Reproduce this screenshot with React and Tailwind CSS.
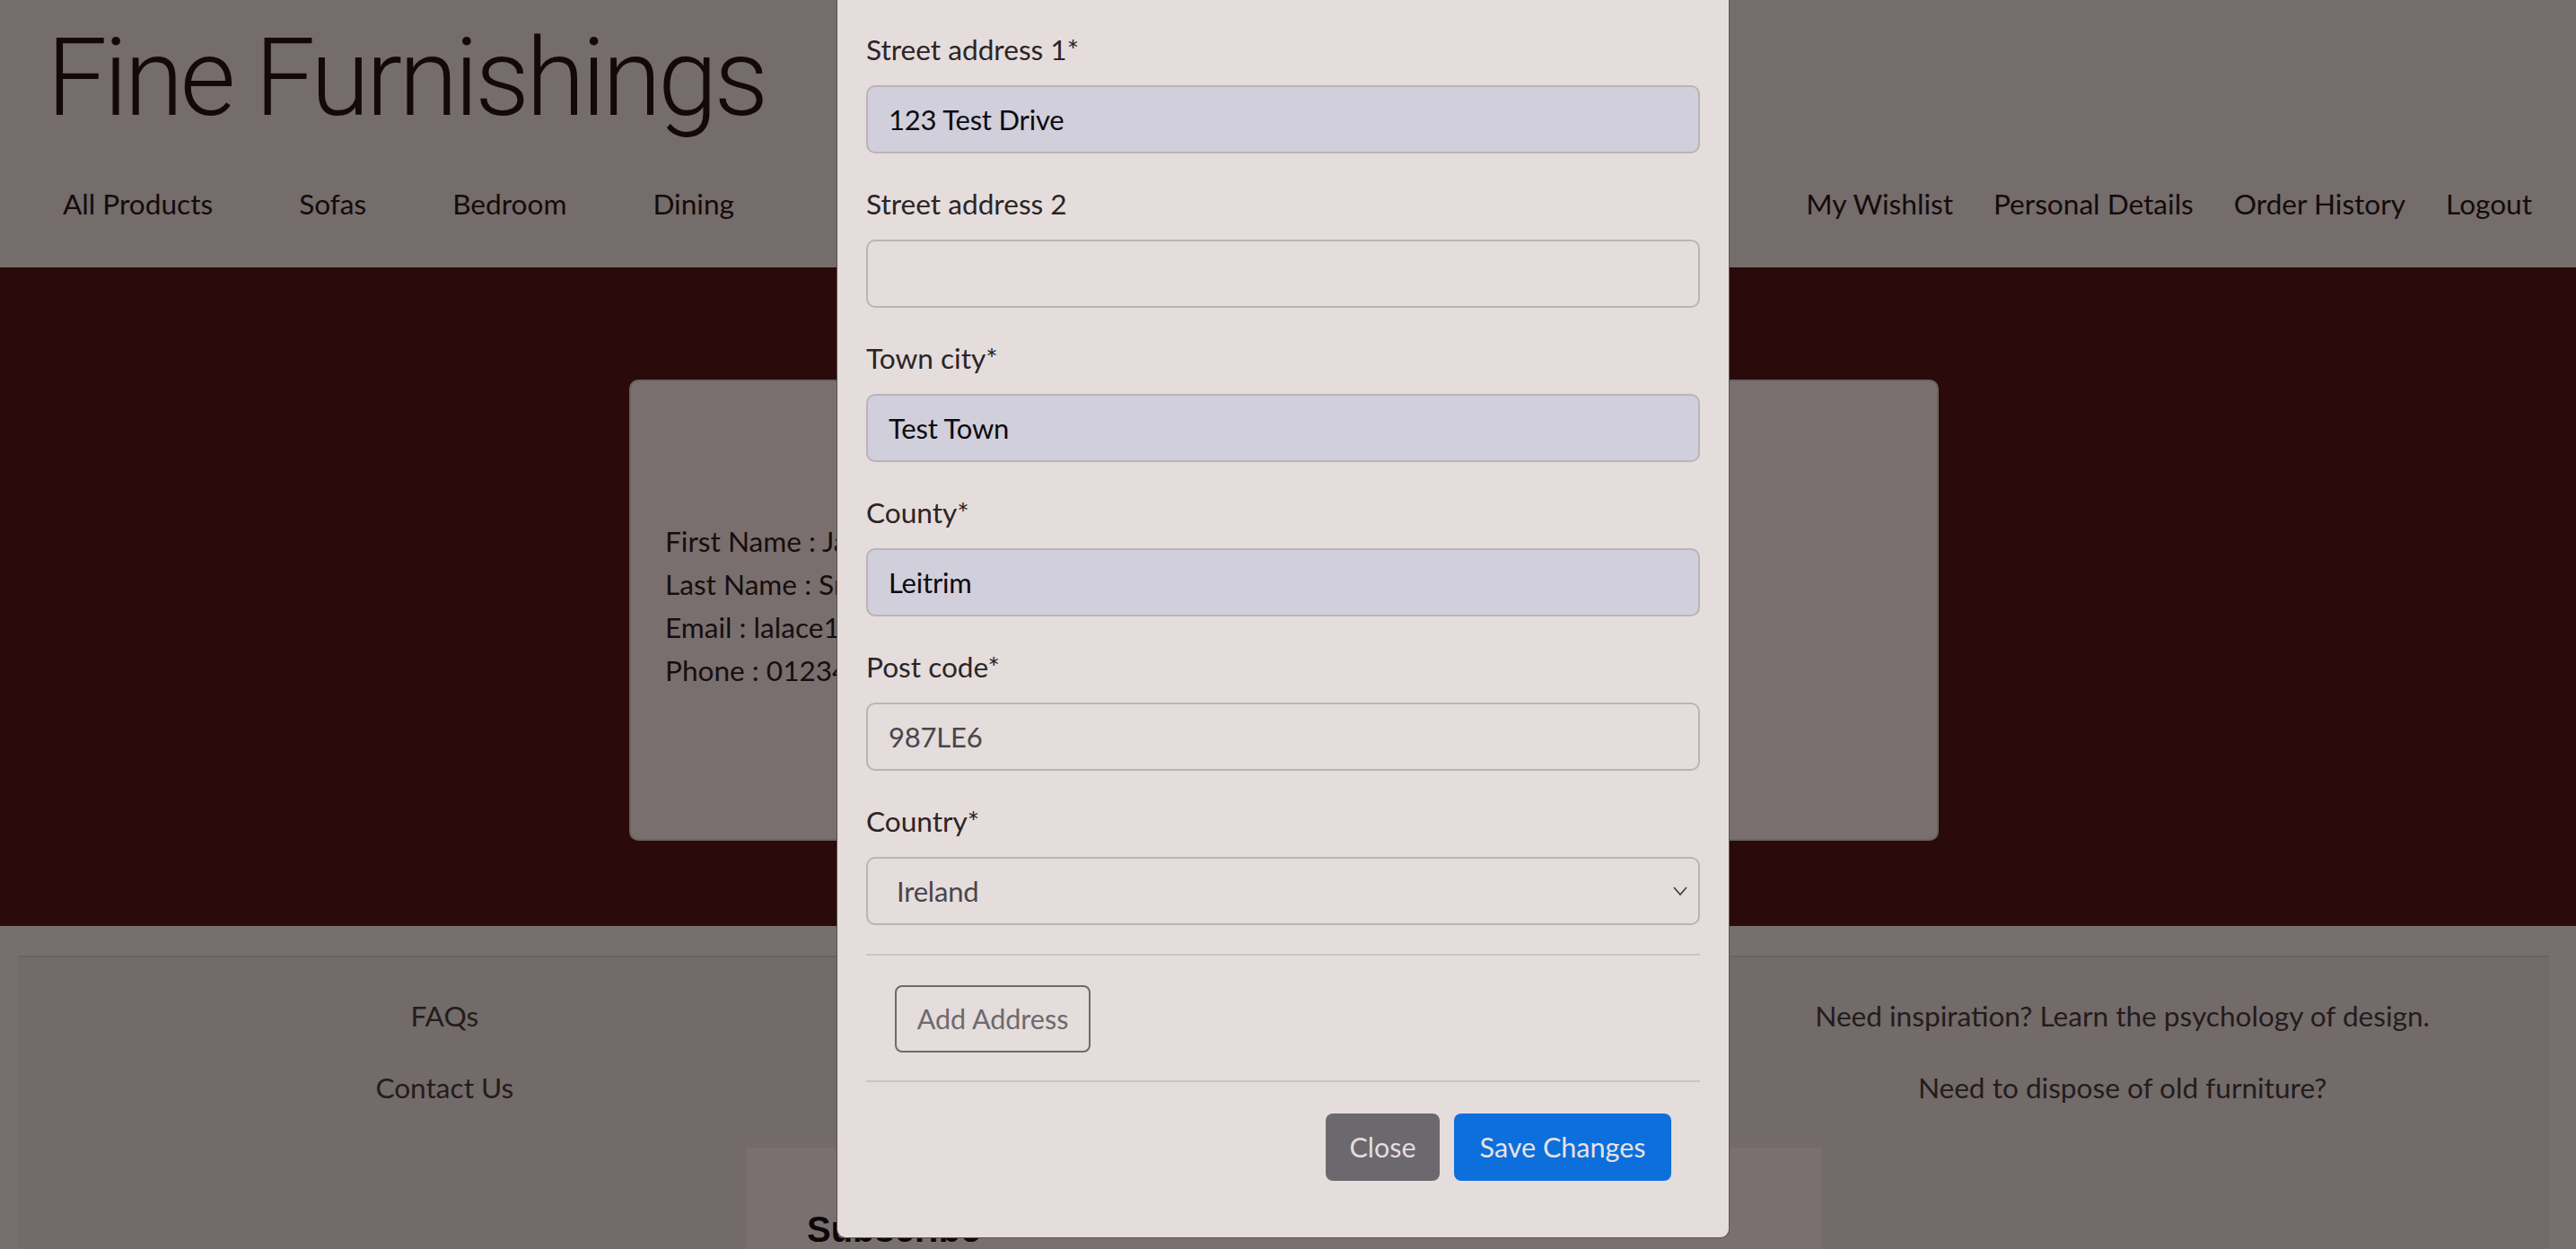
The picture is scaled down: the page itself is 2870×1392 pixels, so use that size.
import React from "react";

const body = "font-['Lato','Noto_Sans',sans-serif]";

function Field({ label, value, filled }) {
  return (
    <div className="mb-[32px] last:mb-0">
      <div className="mb-[16px] h-[48px] text-[31.6px] leading-[48px] text-[#2a2526]">{label}</div>
      <div
        className={
          "flex h-[76px] items-center rounded-[10px] border-2 border-[#bab4b7] pl-[23px] text-[31px] tracking-[-0.2px] " +
          (filled ? "bg-[#d0cfdb] text-[#0c0b0e]" : "bg-[#e5dcdc] text-[#48454c]")
        }
      >
        {value}
      </div>
    </div>
  );
}

export default function App() {
  return (
    <div className={"relative h-[1392px] w-full overflow-hidden bg-[#776e6e] " + body}>
      {/* Header */}
      <header className="h-[298px] bg-[#756c6c]">
        <div className="pl-[52px] pt-[27px]">
          <h1 className="h-[120px] font-['Roboto',sans-serif] text-[120px] font-light leading-[120px] tracking-[-4px] text-[#130909]">
            Fine Furnishings
          </h1>
        </div>
        <nav className="mt-[56px] flex items-start justify-between text-[31.6px] leading-[48px] text-[#140b0b]">
          <ul className="flex gap-[96px] pl-[70px]">
            <li>All Products</li>
            <li>Sofas</li>
            <li>Bedroom</li>
            <li>Dining</li>
          </ul>
          <ul className="flex gap-[45px] pr-[49px]">
            <li>My Wishlist</li>
            <li>Personal Details</li>
            <li>Order History</li>
            <li>Logout</li>
          </ul>
        </nav>
      </header>

      {/* Main */}
      <main className="h-[734px] bg-[#2a0a0a] pt-[125px]">
        <div className="ml-[701px] h-[514px] w-[1459px] rounded-[10px] border-2 border-[#6b6161] bg-[#796f6f] px-[38px] pt-[154px] text-[31.6px] leading-[48px] text-[#160e0e]">
          <p>First Name : Jane</p>
          <p>Last Name : Smith</p>
          <p>Email : lalace1@example.com</p>
          <p>Phone : 01234</p>
        </div>
      </main>

      {/* Footer */}
      <footer className="pl-[20px] pr-[30px] pt-[33px]">
        <div className="h-[400px] border-t-2 border-[#6a6161] bg-[#736a6a] pt-[41px]">
          <div className="grid grid-cols-3 px-[8px] text-center text-[31.6px] leading-[48px] text-[#231c1c]">
            <div className="flex flex-col gap-[32px]">
              <span>FAQs</span>
              <span>Contact Us</span>
            </div>
            <div className="flex flex-col gap-[32px]" />
            <div className="flex flex-col gap-[32px]">
              <span>Need inspiration? Learn the psychology of design.</span>
              <span>Need to dispose of old furniture?</span>
            </div>
          </div>
          <div className="ml-[811px] mt-[43px] h-[200px] w-[1199px] bg-[#7a7070] pl-[68px] pt-[67px]">
            <h5 className="font-['Liberation_Sans',Arial,sans-serif] text-[40px] font-bold leading-[48px] text-[#0e0707]">
              Subscribe
            </h5>
          </div>
        </div>
      </footer>

      {/* Modal overlay */}
      <div className="absolute left-[932px] top-0 w-[995px]">
        <div className="rounded-b-[10px] border-x border-b border-[#5d5454] bg-[#e5dcdc] px-[32px] pb-[63px] pt-[31px]">
          <Field label="Street address 1*" value="123 Test Drive" filled />
          <Field label="Street address 2" value="" />
          <Field label="Town city*" value="Test Town" filled />
          <Field label="County*" value="Leitrim" filled />
          <Field label="Post code*" value="987LE6" />
          <div>
            <div className="mb-[16px] h-[48px] text-[31.6px] leading-[48px] text-[#2a2526]">Country*</div>
            <div className="flex h-[76px] items-center justify-between rounded-[10px] border-2 border-[#bab4b7] bg-[#e5dcdc] pl-[32px] pr-[10px] text-[31px] tracking-[-0.2px] text-[#48454c]">
              <span>Ireland</span>
              <svg width="18" height="12" viewBox="0 0 18 12" className="mr-[1px]">
                <polyline points="2,2 9,10 16,2" fill="none" stroke="#3b3a3e" strokeWidth="1.6" />
              </svg>
            </div>
          </div>
          <div className="mt-[32px] h-[2px] bg-[#cbc3c5]" />
          <div className="mt-[33px] pl-[32px]">
            <button className="flex h-[75px] w-[218px] items-center justify-center rounded-[8px] border-2 border-[#6c6a6e] text-[30.5px] text-[#6c6a6e]">
              Add Address
            </button>
          </div>
          <div className="mt-[31px] h-[2px] bg-[#cbc3c5]" />
          <div className="mt-[35px] flex justify-end gap-[16px] pr-[32px]">
            <button className="flex h-[75px] w-[127px] items-center justify-center rounded-[8px] bg-[#6b696e] text-[30.5px] text-[#e5dcdc]">
              Close
            </button>
            <button className="flex h-[75px] w-[242px] items-center justify-center rounded-[8px] bg-[#0c6fdc] text-[30.5px] text-[#e8e2e4]">
              Save Changes
            </button>
          </div>
        </div>
      </div>
    </div>
  );
}
